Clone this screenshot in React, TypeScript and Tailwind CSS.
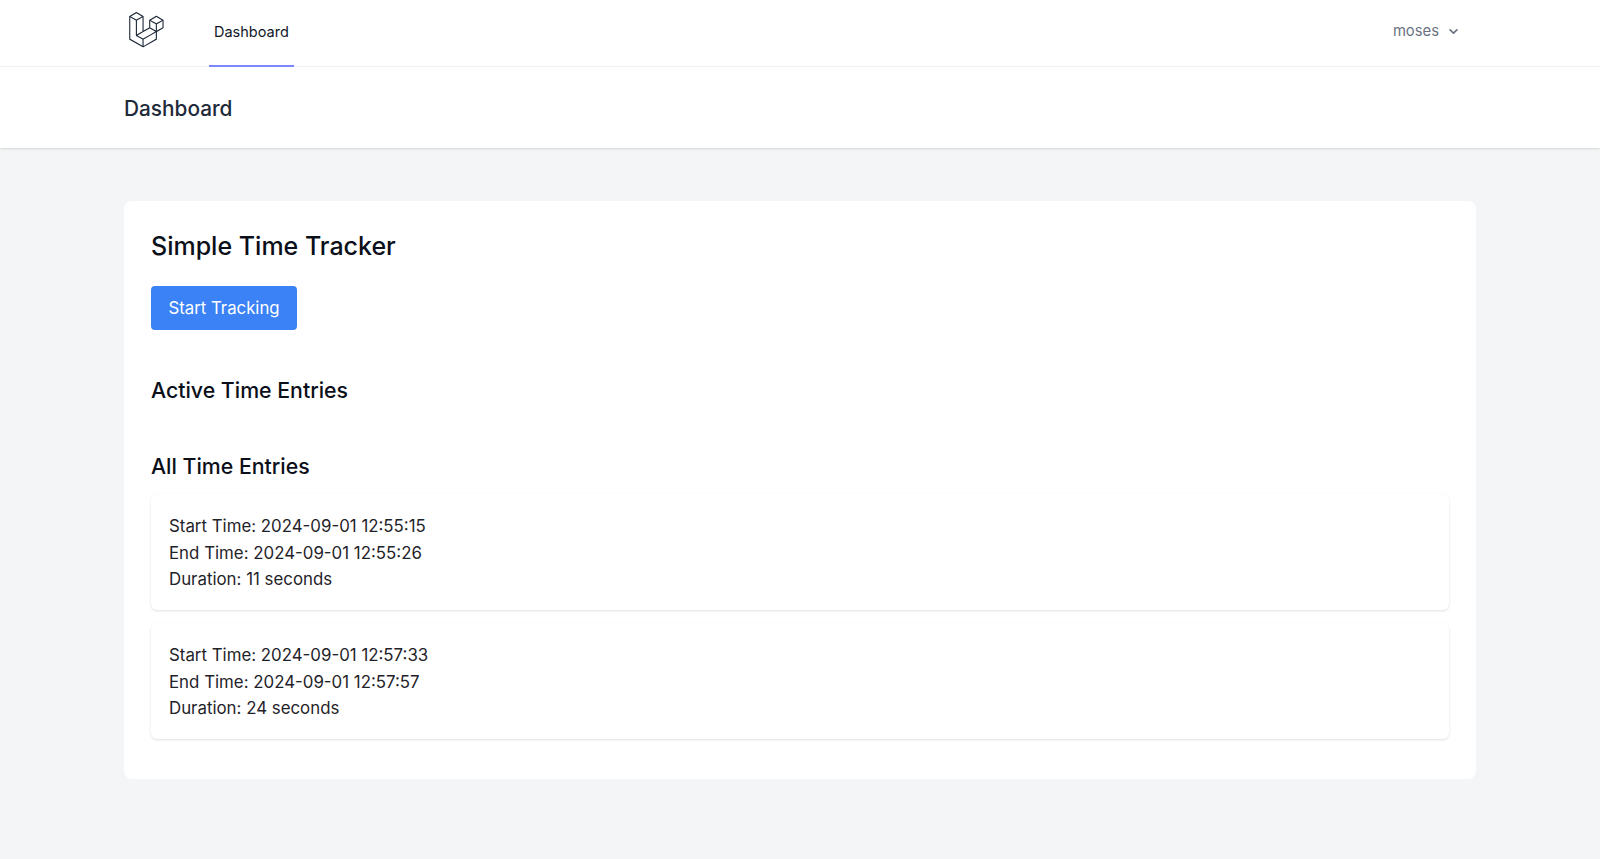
const font = { fontFamily: '"Inter", "Liberation Sans", sans-serif' };

function Logo() {
  return (
    <svg viewBox="0 0 50 52" className="block h-[36px] w-[35px] text-gray-800" fill="currentColor">
      <path fillRule="evenodd" d="M49.626 11.564a.809.809 0 0 1 .028.209v10.972a.8.8 0 0 1-.402.694l-9.209 5.302V39.25c0 .286-.152.55-.4.694L20.42 51.01c-.044.025-.092.041-.14.058-.018.006-.035.017-.054.022a.805.805 0 0 1-.41 0c-.022-.006-.042-.018-.063-.026-.044-.016-.09-.03-.132-.054L.402 39.944A.801.801 0 0 1 0 39.25V6.334c0-.072.01-.142.028-.21.006-.023.02-.044.028-.067.015-.042.029-.085.051-.124.015-.026.037-.047.055-.071.023-.032.044-.065.071-.093.023-.023.053-.04.079-.06.029-.024.055-.05.088-.069h.001l9.61-5.533a.802.802 0 0 1 .8 0l9.61 5.533h.002c.032.02.059.045.088.068.026.02.055.038.078.06.028.029.048.062.072.094.017.024.04.045.054.071.023.04.036.082.052.124.008.023.022.044.028.068a.809.809 0 0 1 .028.209v20.559l8.008-4.611v-10.51c0-.07.01-.141.028-.208.007-.024.02-.045.028-.068.016-.042.03-.085.052-.124.015-.026.037-.047.054-.071.024-.032.044-.065.072-.093.023-.023.052-.04.078-.06.03-.024.056-.05.088-.069h.001l9.611-5.533a.801.801 0 0 1 .8 0l9.61 5.533c.034.02.06.045.09.068.025.02.054.038.077.06.028.029.048.062.072.094.018.024.04.045.054.071.023.039.036.082.052.124.009.023.022.044.028.068zm-1.574 10.718v-9.124l-3.363 1.936-4.646 2.675v9.124l8.01-4.611zm-9.61 16.505v-9.13l-4.57 2.61-13.05 7.448v9.216l17.62-10.144zM1.602 7.719v31.068L19.22 48.93v-9.214l-9.204-5.209-.003-.002-.004-.002c-.031-.018-.057-.044-.086-.066-.025-.02-.054-.036-.076-.058l-.002-.003c-.026-.025-.044-.056-.066-.084-.02-.027-.044-.05-.06-.078l-.001-.003c-.018-.03-.029-.066-.042-.1-.013-.03-.03-.058-.038-.09v-.001c-.01-.038-.012-.078-.016-.117-.004-.03-.012-.06-.012-.09v-.002-21.481L4.965 9.654 1.602 7.72zm8.81-5.994L2.405 6.334l8.005 4.609 8.006-4.61-8.006-4.608zm4.164 28.764l4.645-2.674V7.719l-3.363 1.936-4.646 2.675v20.096l3.364-1.937zM39.243 7.164l-8.006 4.609 8.006 4.609 8.005-4.61-8.005-4.608zm-.801 10.605l-4.646-2.675-3.363-1.936v9.124l4.645 2.674 3.364 1.937v-9.124zM20.02 38.33l11.743-6.704 5.87-3.35-8-4.606-9.211 5.303-8.395 4.833 7.993 4.524z" />
    </svg>
  );
}

function Entry({ start, end, duration }: { start: string; end: string; duration: string }) {
  return (
    <div className="rounded-md bg-white px-[18px] pb-[17px] pt-[19px] text-[16.85px] leading-[26.67px] text-[#1f2329] shadow">
      <p>Start Time: {start}</p>
      <p>End Time: {end}</p>
      <p>Duration: {duration}</p>
    </div>
  );
}

export default function App() {
  return (
    <div className="min-h-[859px] bg-[#f3f5f6]" style={font}>
      <nav className="h-[67px] border-b border-gray-100 bg-white">
        <div className="mx-auto flex h-[67px] w-[1352px] items-stretch justify-between pl-[5px] pr-[14px]">
          <div className="flex items-stretch">
            <div className="flex items-start pt-[12px]"><Logo /></div>
            <div className="ml-[45px] flex items-center border-b-2 border-indigo-400 px-[5px] pb-[1px] text-[14.5px] text-gray-900">Dashboard</div>
          </div>
          <div className="flex items-center gap-[6px] pb-[4px] text-[14.8px] text-gray-500">
            moses
            <svg viewBox="0 0 20 20" className="h-[17px] w-[17px]" fill="currentColor"><path fillRule="evenodd" clipRule="evenodd" d="M5.293 7.293a1 1 0 011.414 0L10 10.586l3.293-3.293a1 1 0 111.414 1.414l-4 4a1 1 0 01-1.414 0l-4-4a1 1 0 010-1.414z" /></svg>
          </div>
        </div>
      </nav>
      <header className="h-[81px] bg-white shadow">
        <div className="mx-auto flex h-full w-[1352px] items-center pt-[2px] text-[20.8px] font-medium text-gray-800">Dashboard</div>
      </header>
      <main className="pt-[53px]">
        <div className="mx-auto w-[1352px] rounded-lg bg-white px-[27px] pb-[40px] pt-[27px] text-gray-900">
          <h1 className="text-[25px] font-medium leading-[36px] text-[#0b0f19]">Simple Time Tracker</h1>
          <button className="mt-[22px] block h-[44px] w-[146px] rounded bg-[#3b82f6] pt-[2px] text-[16.8px] text-white">Start Tracking</button>
          <h2 className="mt-[46px] text-[21.3px] font-medium leading-[28px] text-[#0b0f19]">Active Time Entries</h2>
          <h2 className="mt-[48px] text-[21.3px] font-medium leading-[28px] text-[#0b0f19]">All Time Entries</h2>
          <div className="mt-[14px] flex flex-col gap-[13px]">
            <Entry start="2024-09-01 12:55:15" end="2024-09-01 12:55:26" duration="11 seconds" />
            <Entry start="2024-09-01 12:57:33" end="2024-09-01 12:57:57" duration="24 seconds" />
          </div>
        </div>
      </main>
    </div>
  );
}
